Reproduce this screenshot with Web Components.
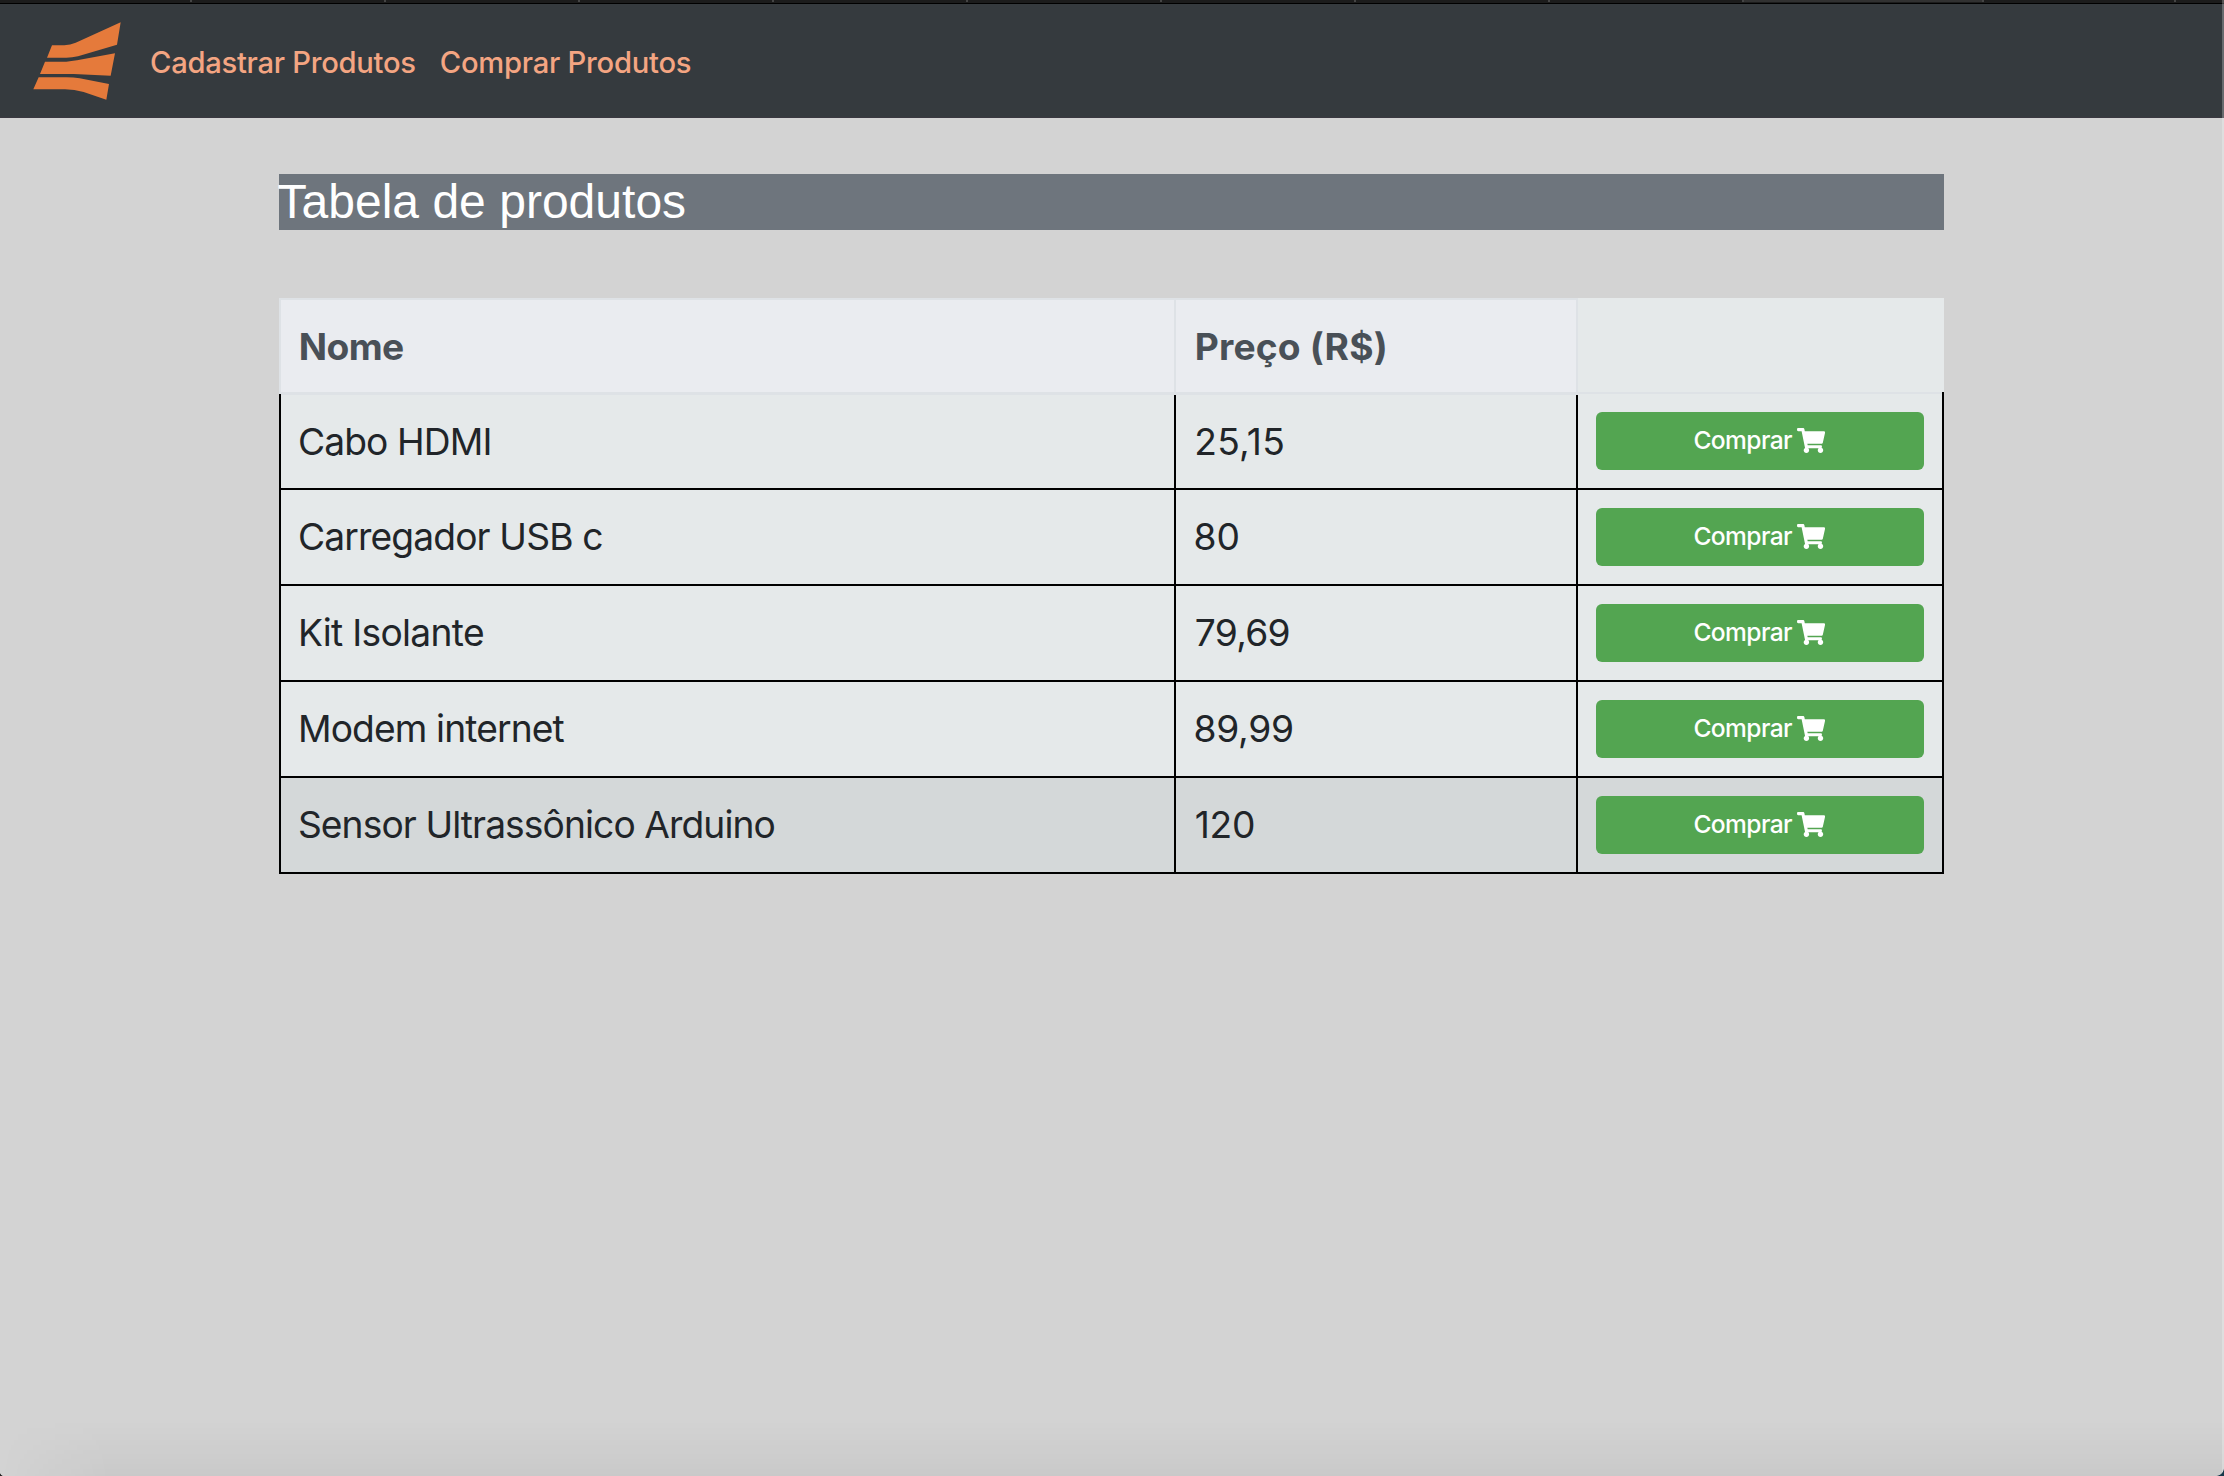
<!DOCTYPE html>
<html lang="pt-BR">
<head>
<meta charset="utf-8">
<title>Tabela de produtos</title>
<style>
html,body{margin:0;height:100%}
body{background:#d3d3d3;font-family:Inter,"Liberation Sans",sans-serif;overflow:hidden}
</style>
</head>
<body>
<loja-app></loja-app>
<script>
// Base class: attaches an open shadow root and fills it from the class markup.
class Base extends HTMLElement{
  constructor(){super();this.attachShadow({mode:'open'});}
  connectedCallback(){this.shadowRoot.innerHTML=this.render();}
}

// One line of text, tracked so that its ink spans `w` pixels, starting `dx` after its box.
class FitText extends HTMLElement{
  connectedCallback(){
    this.attachShadow({mode:'open'}).innerHTML='<style>:host{display:block;white-space:pre}span{display:block}</style><span><slot></slot></span>';
    const t=this.textContent,cs=getComputedStyle(this),c=document.createElement('canvas').getContext('2d');
    c.font=`${cs.fontWeight} ${cs.fontSize} ${cs.fontFamily}`;
    const m=c.measureText(t),w=+this.getAttribute('w'),dx=+(this.getAttribute('dx')||0);
    const s=this.shadowRoot.querySelector('span');
    s.style.letterSpacing=((w-m.actualBoundingBoxLeft-m.actualBoundingBoxRight)/(t.length-1)).toFixed(3)+'px';
    s.style.marginLeft=(dx+m.actualBoundingBoxLeft).toFixed(2)+'px';
    s.style.width=w+'px';
  }
}
customElements.define('fit-text',FitText);

customElements.define('tab-strip',class extends Base{render(){
  const widths=[190,192,192,192,192,192,192,192,192,238,190,48];
  return `<style>:host{display:flex;height:3px;border-bottom:1px solid #000;background:#1c1c1c}
  i{box-sizing:border-box;flex:none;height:2px;border-right:2px solid #454545}.on{background:#313131}i:last-child{border:0}</style>`+
  widths.map((w,k)=>`<i class="${k==9?'on':''}" style="width:${w+(k<11?2:0)}px"></i>`).join('');
}});

customElements.define('marca-logo',class extends Base{render(){return `
  <style>:host{display:block;width:88px;height:78px}svg{display:block}</style>
  <svg width="88" height="78" viewBox="100 66 264 234" fill="#e57a3b">
  <path d="M157 136H194Q212 135 228 128L363 67L352 134L235 169Q217 173 200 173H142Z"/>
  <path d="M136 185H200Q215 184 232 181L346 160L333 227L222 222H121Z"/>
  <path d="M117 232H200Q222 232 240 235L328 252L320 299L252 276Q224 268 196 268H101Z"/></svg>`;}});

customElements.define('barra-nav',class extends Base{render(){return `
  <style>:host{display:flex;box-sizing:border-box;height:114px;background:#353a3e;border-bottom:1px solid #3a3840;padding:18px 0 0 33px;color:#f4a582;font-size:29.2px;font-weight:450;line-height:40px}
  nav{display:flex;padding-top:21px;margin-left:30px}a{display:block}a+a{margin-left:26.5px}</style>
  <marca-logo></marca-logo>
  <nav><a><fit-text w="264.3">Cadastrar Produtos</fit-text></a><a><fit-text w="250">Comprar Produtos</fit-text></a></nav>`;}});

customElements.define('botao-comprar',class extends Base{render(){return `
  <style>:host{display:block;flex:1}
  button{all:unset;box-sizing:border-box;display:flex;width:100%;height:58px;border-radius:6px;background:#53a551;color:#fff;padding:14px 0 0 98.4px;font-size:24.6px;font-weight:450;line-height:28px}
  svg{display:block;margin:1.7px 0 0 6.1px}</style>
  <button><fit-text w="97.7">Comprar</fit-text>
  <svg width="28.2" height="25" viewBox="0 0 576 512" fill="#fff"><path d="M528.12 301.319l47.273-208C578.806 78.301 567.391 64 551.99 64H159.208l-9.166-44.81C147.758 8.021 137.93 0 126.529 0H24C10.745 0 0 10.745 0 24v16c0 13.255 10.745 24 24 24h69.883l70.248 343.435C147.325 417.1 136 435.222 136 456c0 30.928 25.072 56 56 56s56-25.072 56-56c0-15.674-6.447-29.835-16.824-40h209.647C430.447 426.165 424 440.326 424 456c0 30.928 25.072 56 56 56s56-25.072 56-56c0-22.172-12.888-41.332-31.579-50.405l5.517-24.276c3.413-15.018-8.002-29.319-23.403-29.319H218.117l-6.545-32h293.145c11.206 0 20.92-7.754 23.403-18.681z"/></svg></button>`;}});

customElements.define('linha-produto',class extends Base{render(){
  const a=n=>this.getAttribute(n);
  return `
  <style>:host{display:grid;grid-template-columns:895px 402px 366px;box-sizing:border-box;height:96px;background:#e5e9ea;border-left:2px solid #000;border-bottom:2px solid #000;color:#212529;font-size:37.2px;font-weight:430;line-height:46px}
  :host([destaque]){background:#d4d8d9}
  div{box-sizing:border-box;border-right:2px solid #000;padding:24px 18px 0}
  .b{padding-top:18px}
  :host([primeira]) div:not(.b){border-top:1px solid #dee2e6;border-right:0;background:linear-gradient(#000,#000) right/2px 100% no-repeat}</style>
  <div><fit-text dx="${a('ndx')}" w="${a('nw')}">${a('nome')}</fit-text></div>
  <div><fit-text dx="${a('pdx')}" w="${a('pw')}">${a('preco')}</fit-text></div>
  <div class="b"><botao-comprar></botao-comprar></div>`;}});

customElements.define('cabecalho-tabela',class extends Base{render(){return `
  <style>:host{display:grid;grid-template-columns:897px 402px 366px;height:96px;background:#e5e9ea;color:#495057;font-weight:700;font-size:37.2px;line-height:46px}
  div{box-sizing:border-box;border-bottom:2px solid #dee2e6}
  .h{background:#eaecf0;border-top:2px solid #dee2e6;border-right:2px solid #dee2e6;padding:24px 18px 0}
  .f{border-left:2px solid #dee2e6}
  .v{border-right:2px solid #000;border-image:linear-gradient(#e5e9ea 94px,#000 94px) 0 2 0 0;background:linear-gradient(#dee2e6,#dee2e6) bottom/100% 2px no-repeat;border-bottom:0}</style>
  <div class="h f"><fit-text dx="1.7" w="102.3">Nome</fit-text></div>
  <div class="h"><fit-text dx="2.7" w="187.4">Preço (R$)</fit-text></div>
  <div class="v"></div>`;}});

customElements.define('tabela-produtos',class extends Base{render(){
  const rows=[['Cabo HDMI','25,15',.9,189.6,2.2,87],['Carregador USB c','80',.9,302.3,1.5,43],['Kit Isolante','79,69',1.9,182,1.8,92.7],['Modem internet','89,99',2,263.5,1.5,96.5],['Sensor Ultrassônico Arduino','120',.9,474.7,1.8,58.2]];
  return `<style>:host{display:flex;flex-direction:column;width:1665px}</style><cabecalho-tabela></cabecalho-tabela>`+
  rows.map((r,i)=>`<linha-produto ${i==0?'primeira':''} ${i==4?'destaque':''} nome="${r[0]}" preco="${r[1]}" ndx="${r[2]}" nw="${r[3]}" pdx="${r[4]}" pw="${r[5]}"></linha-produto>`).join('');
}});

customElements.define('titulo-pagina',class extends Base{render(){return `
  <style>:host{display:block;height:56px;background:#6e757d;margin-bottom:68px}
  h1{margin:0;font:400 48px/56px "Liberation Sans",Arial,sans-serif;color:#fff}</style>
  <h1><fit-text dx="-.5" w="406.6">Tabela de produtos</fit-text></h1>`;}});

customElements.define('loja-app',class extends Base{render(){return `
  <style>:host{display:block;position:relative;height:1476px;overflow:hidden}
  main{width:1665px;margin:56px 0 0 279px}
  .s{position:absolute;left:0;right:0;bottom:0;height:56px;background:linear-gradient(rgba(0,0,0,0),rgba(0,0,0,.015) 40%,rgba(0,0,0,.045));-webkit-mask:linear-gradient(90deg,transparent,#000 110px);mask:linear-gradient(90deg,transparent,#000 110px)}
  .e{position:absolute;right:0;top:0;width:2px;height:100%;background:rgba(255,255,255,.25)}
  .c{position:absolute;bottom:0;width:8px;height:8px}
  .r{right:0;background:radial-gradient(circle at 0 0,transparent 7.5px,#17394b 8.2px)}
  .l{left:0;width:5px;height:5px;background:radial-gradient(circle at 100% 0,transparent 5px,#222 5.8px)}</style>
  <tab-strip></tab-strip><barra-nav></barra-nav>
  <main><titulo-pagina></titulo-pagina><tabela-produtos></tabela-produtos></main>
  <div class="s"></div><div class="e"></div><div class="c l"></div><div class="c r"></div>`;}});
</script>
</body>
</html>
